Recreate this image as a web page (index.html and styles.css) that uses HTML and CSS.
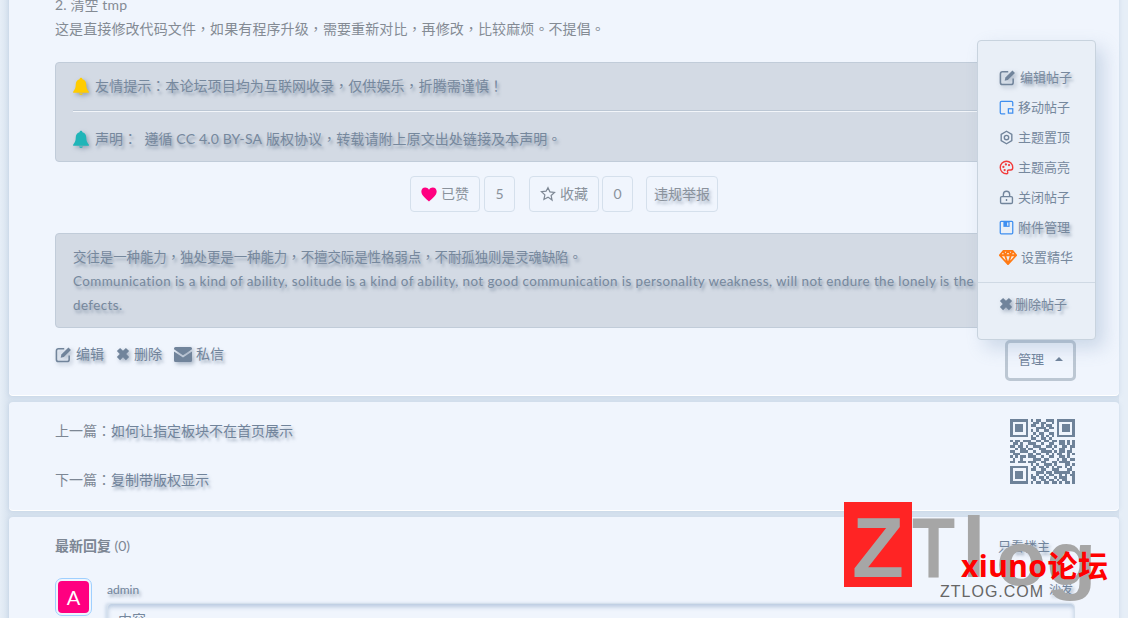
FILE: index.html
```html
<!DOCTYPE html>
<html lang="zh-Hant">
<head>
  <meta charset="UTF-8" />
  <meta name="viewport" content="width=device-width, initial-scale=1.0" />
  <title>xiuno论坛</title>
  <link rel="stylesheet" href="styles.css">
</head>
<body>
  <div class="card post-card">
    <p class="line"><span class="latin">2.</span> 清空 <span class="latin">tmp</span></p>
    <p class="line">这是直接修改代码文件，如果有程序升级，需要重新对比，再修改，比较麻烦。不提倡。</p>

    <div class="alert notice">
      <div class="notice-row">
        <svg class="icon bell yellow" viewBox="0 0 24 24"><path d="M12 1c1 0 2 .8 2 2 3.500 1 5 4 5 7 0 5 1.500 7 3.500 9.500v1.500H1.500v-1.500C3.500 17 5 15 5 10c0-3 1.500-6 5-7 0-1.200 1-2 2-2zM9.500 22h5c0 1-1 2-2.500 2s-2.500-1-2.500-2z"/></svg>
        <span>友情提示：本论坛项目均为互联网收录，仅供娱乐，折腾需谨慎！</span>
      </div>
      <hr class="notice-line">
      <div class="notice-row last">
        <svg class="icon bell teal" viewBox="0 0 24 24"><path d="M12 1c1 0 2 .8 2 2 3.500 1 5 4 5 7 0 5 1.500 7 3.500 9.500v1.500H1.500v-1.500C3.500 17 5 15 5 10c0-3 1.500-6 5-7 0-1.200 1-2 2-2zM9.500 22h5c0 1-1 2-2.500 2s-2.500-1-2.500-2z"/></svg>
        <span>声明：&nbsp; 遵循 <span class="latin">CC 4.0 BY-SA</span> 版权协议，转载请附上原文出处链接及本声明。</span>
      </div>
    </div>

    <div class="post-buttons">
      <span class="btn like"><svg class="icon heart" viewBox="0 0 24 22"><path d="M12 21.500C8 18 .5 12.500.5 6.500.5 3 3 .5 6.300.5 8.700.5 10.800 1.800 12 4c1.200-2.200 3.300-3.500 5.700-3.500C21 .5 23.500 3 23.500 6.500c0 6-7.500 11.500-11.500 15z"/></svg>已赞</span>
      <span class="btn count">5</span>
      <span class="btn like gap-left"><svg class="icon star" viewBox="0 0 24 24"><path d="M12 2.500l2.900 6.300 6.900.8-5.100 4.700 1.400 6.800L12 16.700l-6.100 3.400 1.400-6.800-5.100-4.700 6.900-.8z"/></svg>收藏</span>
      <span class="btn count tight">0</span>
      <span class="btn report gap-left tight">违规举报</span>
    </div>

    <div class="alert quote">
      交往是一种能力，独处更是一种能力，不擅交际是性格弱点，不耐孤独则是灵魂缺陷。<br>
      <span class="quote-en">Communication is a kind of ability, solitude is a kind of ability, not good communication is personality weakness, will not endure the lonely is the soul defects.</span>
    </div>

    <div class="post-actions">
      <div class="action-links">
        <a><svg class="icon" viewBox="0 0 24 24"><path class="line-art" d="M20 13.500V19a3 3 0 0 1-3 3H5a3 3 0 0 1-3-3V7a3 3 0 0 1 3-3h8"/><path d="M9 12L19 2l3.500 3.500-10 10L8 16.500z"/></svg>编辑</a>
        <a><svg class="icon small" viewBox="0 0 24 24"><path d="M7 1.500l5 5 5-5 5.500 5.500-5 5 5 5-5.500 5.500-5-5-5 5L1.500 17l5-5-5-5z"/></svg>删除</a>
        <a><svg class="icon wide" viewBox="0 0 24 20"><path d="M2 0h20a2 2 0 0 1 2 2v1L12 11 0 3V2a2 2 0 0 1 2-2zM0 6l12 8 12-8v12a2 2 0 0 1-2 2H2a2 2 0 0 1-2-2z"/></svg>私信</a>
      </div>
      <span class="manage-btn">管理<i class="caret"></i></span>
    </div>

    <div class="manage-menu">
      <div class="menu-item shadowed"><svg class="icon" viewBox="0 0 24 24"><path class="line-art" d="M20 13.500V19a3 3 0 0 1-3 3H5a3 3 0 0 1-3-3V7a3 3 0 0 1 3-3h8"/><path d="M9 12L19 2l3.500 3.500-10 10L8 16.500z"/></svg>编辑帖子</div>
      <div class="menu-item"><svg class="icon thin" viewBox="0 0 24 24"><path class="blue-line" d="M22 10V4a2 2 0 0 0-2-2H4a2 2 0 0 0-2 2v16a2 2 0 0 0 2 2h6"/><rect class="blue-line" x="15" y="14" width="7" height="7" stroke-width="2.500"/></svg>移动帖子</div>
      <div class="menu-item"><svg class="icon thin" viewBox="0 0 24 24"><path class="line-art round" d="M12 2l8.500 5v10L12 22l-8.500-5V7z"/><circle class="line-art" cx="12" cy="12" r="3.500"/></svg>主题置顶</div>
      <div class="menu-item"><svg class="icon thin" viewBox="0 0 24 24"><path class="red-line" d="M12 2a10 10 0 1 0 0 20c2 0 2.500-1.500 1.800-2.800-.8-1.500 0-3.200 2-3.200H19c2 0 3-1.500 3-4 0-5.500-4.500-10-10-10z"/><circle class="red-dot" cx="7" cy="11" r="1.800"/><circle class="red-dot" cx="11" cy="7" r="1.800"/><circle class="red-dot" cx="16" cy="8" r="1.800"/><circle class="red-dot" cx="9" cy="16" r="1.800"/></svg>主题高亮</div>
      <div class="menu-item"><svg class="icon thin" viewBox="0 0 24 24"><rect class="line-art" x="2.500" y="10.500" width="19" height="11" rx="2"/><path class="line-art" d="M7 10.500V7a5 5 0 0 1 10 0v3.500M12 14.500v3"/></svg>关闭帖子</div>
      <div class="menu-item shadowed"><svg class="icon thin" viewBox="0 0 24 24"><rect class="blue-line" x="2" y="2" width="20" height="20" rx="1.500" stroke-width="2.500"/><path class="blue-fill" d="M7 2h10v9H7z"/><path class="white-fill" d="M13 4h2v5h-2z"/></svg>附件管理</div>
      <div class="menu-item"><svg class="icon gem" viewBox="0 0 24 20"><path class="orange-line" d="M6 1h12l5 6-11 12L1 7zM1 7h22M8 7l4 12 4-12M6 1l2 6 4-6 4 6 2-6"/></svg>设置精华</div>
      <hr class="menu-line">
      <div class="menu-item shadowed narrow"><svg class="icon small" viewBox="0 0 24 24"><path d="M7 1.500l5 5 5-5 5.500 5.500-5 5 5 5-5.500 5.500-5-5-5 5L1.500 17l5-5-5-5z"/></svg>删除帖子</div>
    </div>
  </div>

  <div class="card nav-card">
    <div class="nav-links">
      <div><span class="nav-label">上一篇：</span><a>如何让指定板块不在首页展示</a></div>
      <div><span class="nav-label">下一篇：</span><a>复制带版权显示</a></div>
    </div>
    <svg class="qr" viewBox="0 0 25 25" shape-rendering="crispEdges">
      <path class="qr-box" d="M.5.500h6v6h-6zM18.500.500h6v6h-6zM.5 18.500h6v6h-6z"/>
      <path class="qr-solid" d="M2 2h3v3H2zM20 2h3v3h-3zM2 20h3v3H2z"/>
      <path class="qr-bits" d="M8 .5h1m1 0h2m2 0h3M9 1.500h2m1 0h2m2 0h1M8 2.500h2m2 0h1m1 0h2M10 3.500h4m1 0h2M8 4.500h1m1 0h1m2 0h2M9 5.500h1m1 0h2m2 0h2M8 6.500h1m1 0h1m1 0h1m1 0h1m1 0h1M8 7.500h2m2 0h2m1 0h1M0 8.500h1m1 0h2m1 0h3m2 0h2m1 0h2m1 0h2m1 0h2m1 0h1m1 0h1M1 9.500h2m1 0h1m2 0h3m2 0h1m2 0h2m2 0h2m1 0h1m1 0h1M0 10.500h2m1 0h2m1 0h1m2 0h3m2 0h2m1 0h1m2 0h2m1 0h2M2 11.500h1m1 0h2m1 0h2m2 0h3m2 0h1m2 0h2m2 0h1M0 12.500h2m2 0h3m2 0h1m2 0h4m1 0h1m1 0h2m1 0h2M1 13.500h3m3 0h2m1 0h2m2 0h1m1 0h1m1 0h2m2 0h1m1 0h2M0 14.500h1m1 0h1m1 0h2m1 0h3m2 0h1m2 0h2m2 0h2m1 0h1m2 0h1M1 15.500h1m2 0h1m4 0h3m1 0h2m3 0h1m1 0h2m1 0h4M0 16.500h2m1 0h3m1 0h3m2 0h2m2 0h2m1 0h4m2 0h1M8 17.500h1m1 0h1m2 0h3m1 0h1m3 0h2m1 0h1M9 18.500h1m1 0h2m1 0h1m1 0h1m1 0h2m1 0h1m1 0h1m1 0h2M8 19.500h2m2 0h2m2 0h3m3 0h2M10 20.500h3m1 0h2m1 0h6m1 0h1M8 21.500h1m1 0h1m2 0h1m1 0h2m2 0h1m1 0h1m1 0h3M8 22.500h2m1 0h2m1 0h1m2 0h1m1 0h3m2 0h2M9 23.500h1m2 0h2m1 0h2m1 0h1m1 0h2m2 0h1M8 24.500h1m1 0h2m1 0h2m1 0h2m1 0h1m1 0h2m1 0h3"/>
    </svg>
  </div>

  <div class="card reply-card">
    <div class="reply-head">
      <span>最新回复 <em>(0)</em></span>
      <a class="only-host">只看楼主</a>
    </div>
    <div class="reply">
      <div class="avatar"><span>A</span></div>
      <div class="reply-main">
        <div class="reply-meta"><a>admin</a><a>沙发</a></div>
        <div class="reply-box">内容</div>
      </div>
    </div>
  </div>

  <div class="watermark">
    <span class="wm-z">Z</span>
    <span class="wm-t">T</span>
    <span class="wm-l">l</span>
    <span class="wm-og">og</span>
    <span class="wm-red">xiuno论坛</span>
    <span class="wm-site">ZTLOG.COM</span>
  </div>
</body>
</html>
```

FILE: styles.css
```css
html, body {
  height: 618px;
  overflow: hidden;
}
body {
  position: relative;
  margin: 0;
  padding: 0 9px;
  font-family: 'Lato', 'Noto Sans CJK TC', sans-serif;
  font-size: 14px;
  line-height: 24px;
  color: #7d8794;
  background-color: #d8e3ef;
  background-image: linear-gradient(to right, #e6eef7 0, #d8e3ef 9px, #d8e3ef 1119px, #e6eef7 1119px);
}
a {
  color: #71849b;
  text-shadow: 2px 3px 3px rgba(90, 110, 135, .55);
}
p {
  margin: 0;
}
hr {
  margin: 0;
  border: 0;
}
.latin {
  letter-spacing: .17px;
}

.card {
  background-color: #f0f5fd;
  border-radius: 4px;
  box-shadow: 0 1px 0 #fff, 0 1px 4px rgba(150, 175, 205, .35);
}
.post-card {
  position: relative;
  margin-top: -20px;
  padding: 13px 46px 14px;
}
.line {
  color: #848b94;
  letter-spacing: .1px;
}

.alert {
  background-color: #d3dae4;
  border: 1px solid #c1ccd9;
  border-radius: 4px;
  color: #76889d;
  text-shadow: 2px 3px 3px rgba(90, 110, 135, .55);
}
.notice {
  margin-top: 21px;
  padding: 11px 17px 10px;
  letter-spacing: .07px;
}
.notice-row {
  display: flex;
  align-items: center;
  gap: 5px;
  margin-left: -1px;
}
.notice-row.last {
  margin-top: 15px;
}
.notice-line {
  height: 1px;
  margin-top: 13px;
  background-color: #f2f5f9;
  box-shadow: 0 -1px 0 #bcc7d4;
}
.quote {
  margin-top: 21px;
  padding: 11px 17px 10px;
  font-size: 13.400px;
}
.quote-en {
  letter-spacing: .42px;
}

.icon {
  width: 17px;
  height: 17px;
  flex: none;
  fill: #71849b;
  filter: drop-shadow(2px 2px 2px rgba(90, 110, 135, .5));
}
.icon.small {
  width: 14px;
  height: 14px;
}
.icon.wide {
  width: 18px;
  height: 15px;
}
.icon.thin {
  width: 15px;
  height: 15px;
  filter: none;
}
.icon.bell {
  width: 18px;
  height: 18px;
}
.yellow {
  fill: #ffcc00;
}
.teal {
  fill: #20b5b8;
}
.line-art {
  fill: none;
  stroke: #71849b;
  stroke-width: 2.200;
}
.round {
  stroke-linejoin: round;
}
.blue-line {
  fill: none;
  stroke: #3f8ff0;
  stroke-width: 2;
}
.blue-fill {
  fill: #3f8ff0;
}
.white-fill {
  fill: #e9eff8;
}
.red-line {
  fill: none;
  stroke: #f23b3b;
  stroke-width: 2.200;
}
.red-dot {
  fill: #f23b3b;
}
.orange-line {
  fill: #fff1e2;
  stroke: #ff7a14;
  stroke-width: 2.400;
  stroke-linejoin: round;
}

.post-buttons {
  display: flex;
  justify-content: center;
  gap: 4px;
  margin-top: 14px;
}
.btn {
  display: flex;
  align-items: center;
  justify-content: center;
  gap: 4px;
  box-sizing: border-box;
  height: 36px;
  border: 1px solid #d5e0ec;
  border-radius: 4px;
  color: #8a929c;
}
.btn.like {
  width: 70px;
}
.btn.count {
  width: 31px;
}
.btn.report {
  width: 72px;
  text-shadow: 2px 3px 3px rgba(90, 110, 135, .5);
}
.gap-left {
  margin-left: 10px;
}
.btn.count.tight {
  margin-left: -1px;
}
.btn.report.tight {
  margin-left: 9px;
}
.icon.heart {
  width: 16px;
  height: 15px;
  fill: #ff0080;
  filter: none;
}
.icon.star {
  width: 16px;
  height: 16px;
  fill: none;
  stroke: #7d8794;
  stroke-width: 1.800;
  filter: none;
}

.post-actions {
  display: flex;
  justify-content: space-between;
  align-items: flex-start;
  margin-top: 12px;
  margin-right: -3px;
}
.action-links {
  display: flex;
  gap: 12px;
  margin-top: 2px;
}
.action-links a {
  display: flex;
  align-items: center;
  gap: 4px;
}
.manage-btn {
  display: flex;
  align-items: center;
  justify-content: center;
  gap: 11px;
  box-sizing: border-box;
  width: 71px;
  height: 41px;
  padding-bottom: 3px;
  border: 3px solid #bcc7d3;
  border-radius: 5px;
  font-size: 13px;
  color: #71849b;
}
.caret {
  width: 0;
  height: 0;
  border-left: 4px solid transparent;
  border-right: 4px solid transparent;
  border-bottom: 4px solid #71849b;
}

.manage-menu {
  position: absolute;
  right: 23px;
  bottom: 55px;
  box-sizing: border-box;
  width: 119px;
  height: 300px;
  padding: 21px 0 0 21px;
  background-color: #e9eff7;
  border: 1px solid #c8d3de;
  border-radius: 4px;
  box-shadow: 8px 8px 18px rgba(120, 150, 185, .3);
  color: #76889d;
  font-size: 13px;
}
.menu-item {
  display: flex;
  align-items: center;
  gap: 4px;
  height: 30px;
}
.menu-item.narrow {
  gap: 2px;
  margin-top: 6px;
}
.shadowed {
  text-shadow: 2px 3px 3px rgba(90, 110, 135, .55);
}
.icon.gem {
  width: 18px;
  height: 15px;
  filter: none;
}
.menu-line {
  height: 1px;
  margin: 10px 0 0 -21px;
  background-color: #cfd9e4;
}

.nav-card {
  display: flex;
  justify-content: space-between;
  align-items: flex-start;
  margin-top: 7px;
  padding: 17px 44px 18px 46px;
}
.nav-links {
  display: flex;
  flex-direction: column;
  gap: 25px;
}
.nav-label {
  color: #7d8794;
}
.qr {
  width: 65px;
  height: 65px;
}
.qr-box {
  fill: none;
  stroke: #6e8299;
  stroke-width: 1;
}
.qr-solid {
  fill: #6e8299;
}
.qr-bits {
  fill: none;
  stroke: #6e8299;
  stroke-width: 1;
}

.reply-card {
  margin-top: 7px;
  padding: 17px 44px 20px 46px;
}
.reply-head {
  display: flex;
  justify-content: space-between;
  color: #7d8794;
  font-weight: 700;
}
.reply-head em {
  font-style: normal;
  font-weight: 400;
}
.only-host {
  margin-right: 25px;
  font-weight: 400;
  font-size: 13px;
}
.reply {
  display: flex;
  gap: 15px;
  margin-top: 20px;
}
.avatar {
  box-sizing: border-box;
  width: 37px;
  height: 38px;
  padding: 2px;
  border: 1px solid #9fd0ff;
  border-radius: 7px;
}
.avatar span {
  display: flex;
  align-items: center;
  justify-content: center;
  height: 100%;
  background-color: #ff0080;
  border-radius: 4px;
  color: #fff;
  font-size: 20px;
}
.reply-main {
  flex: 1;
}
.reply-meta {
  display: flex;
  justify-content: space-between;
  padding-right: 2px;
  font-size: 12px;
  line-height: 24px;
}
.reply-box {
  height: 60px;
  margin-top: 1px;
  padding: 4px 10px;
  background-color: #f0f5fd;
  border: 1px solid #d5e0ec;
  border-radius: 4px;
  box-shadow: inset 0 3px 4px rgba(150, 175, 205, .6), -2px 0 3px rgba(150, 175, 205, .35);
  color: #76889d;
}

.watermark {
  position: absolute;
  left: 844px;
  top: 502px;
  width: 264px;
  height: 100px;
  color: #a6a6a6;
  font-family: 'Liberation Sans', sans-serif;
  font-weight: 700;
}
.wm-z {
  position: absolute;
  left: 0;
  top: 0;
  width: 68px;
  height: 85px;
  background-color: #ff2424;
  font-size: 85px;
  line-height: 91px;
  text-align: center;
}
.wm-t, .wm-l, .wm-og {
  position: absolute;
  top: 3px;
  font-size: 85px;
  line-height: 85px;
  transform-origin: left top;
}
.wm-t {
  left: 68px;
  transform: scaleX(.83);
}
.wm-l {
  left: 118px;
}
.wm-og {
  left: 152px;
  top: 14px;
  font-size: 76px;
  transform: scaleX(1.08);
}
.wm-red {
  position: absolute;
  left: 117px;
  top: 48px;
  color: #ff0000;
  font-family: 'Noto Sans', 'Noto Sans CJK SC', sans-serif;
  font-size: 30px;
  line-height: 32px;
  font-weight: 700;
  letter-spacing: .5px;
  white-space: nowrap;
}
.wm-site {
  position: absolute;
  left: 96px;
  top: 81px;
  color: #666;
  font-size: 16px;
  font-weight: 400;
  line-height: 18px;
  letter-spacing: 1px;
}
```
